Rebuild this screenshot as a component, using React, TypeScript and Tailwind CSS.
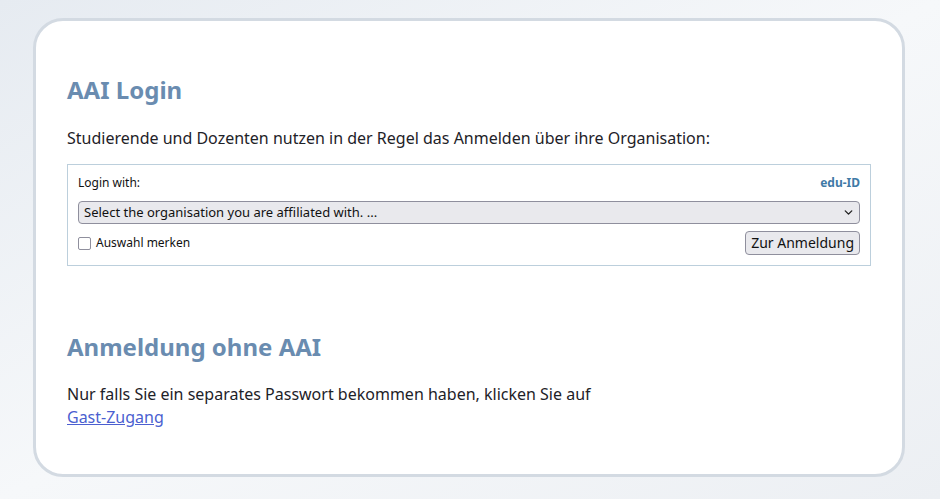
import { ChevronDown } from "lucide-react";

const App = () => {
    return (
        <div
            className="min-h-[499px] w-full bg-gradient-to-br from-[#e6ebf1] via-[#f6f8fa] to-[#eceff3] px-[33px] pt-[18px] pb-[22px]"
            style={{ fontFamily: '"Noto Sans", "Open Sans", sans-serif' }}
        >
            <div className="w-[872px] h-[459px] bg-white border-[3px] border-[#d3dae2] rounded-[30px] px-[31px] pt-[53px]">
                {/* AAI login section */}
                <h1 className="text-[24px] leading-[32px] font-bold text-[#6a8cb0]">AAI Login</h1>
                <p className="mt-[20px] text-[16px] leading-[24px] text-[#1e2228]">
                    Studierende und Dozenten nutzen in der Regel das Anmelden über ihre Organisation:
                </p>
                <div className="mt-[14px] border border-[#bccfdc] px-[10px] pt-[9px] pb-[10px]">
                    <div className="flex items-center justify-between h-[18px]">
                        <span className="text-[12px] text-[#111]">Login with:</span>
                        <span className="text-[12px] font-bold text-[#3f7aa6]">edu-ID</span>
                    </div>
                    <div className="mt-[9px] relative">
                        <div className="h-[23px] bg-[#e9e9ed] border border-[#8f8f9d] rounded-[4px] flex items-center justify-between pl-[5px] pr-[4px]">
                            <span className="text-[13px] text-[#111]">Select the organisation you are affiliated with. ...</span>
                            <ChevronDown size={13} strokeWidth={2.5} className="text-[#222]" />
                        </div>
                    </div>
                    <div className="mt-[7px] flex items-center justify-between">
                        <label className="flex items-center gap-[5px] text-[12px] text-[#111]">
                            <span className="w-[13px] h-[13px] border border-[#8f8f9d] rounded-[2px] bg-white" />
                            Auswahl merken
                        </label>
                        <button className="h-[24px] px-[5px] bg-[#e9e9ed] border border-[#8f8f9d] rounded-[4px] text-[14px] leading-[20px] text-[#111]">
                            Zur Anmeldung
                        </button>
                    </div>
                </div>

                {/* Guest login section */}
                <h2 className="mt-[65px] text-[24px] leading-[32px] font-bold text-[#6a8cb0]">Anmeldung ohne AAI</h2>
                <p className="mt-[20px] text-[16px] leading-[23px] text-[#1e2228]">
                    Nur falls Sie ein separates Passwort bekommen haben, klicken Sie auf
                    <br />
                    <a href="#" className="text-[#4b5fd0] underline">Gast-Zugang</a>
                </p>
            </div>
        </div>
    );
};

export default App;
